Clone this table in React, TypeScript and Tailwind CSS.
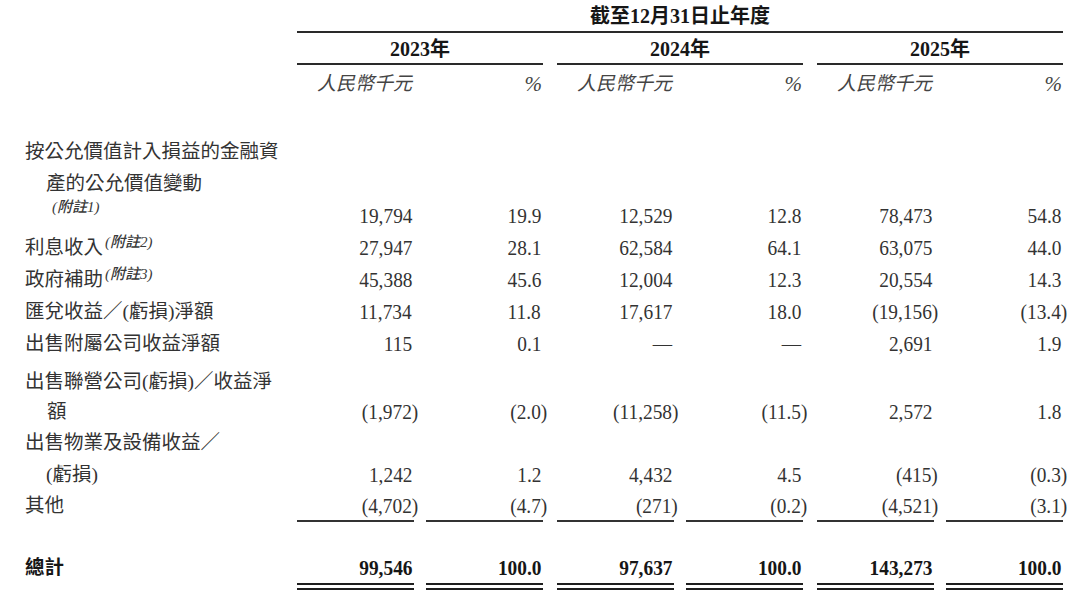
import React from "react";

const FONT = "font-['Liberation_Serif','Noto_Sans_CJK_TC',serif]";

type RowDef = {
  lines: React.ReactNode[];
  values: string[];
  kind?: "normal" | "under" | "total";
  extra?: string;
  leading?: string;
};

const Sup = ({ t, hi }: { t: string; hi?: boolean }) => (
  <span
    className={`text-[15px] font-medium italic leading-none ml-[2px] text-[#3a3a3a] ${
      hi ? "align-[10px]" : "align-[7px]"
    }`}
  >
    {t}
  </span>
);

const Num = ({ v }: { v: string }) => {
  const inner = v.startsWith("(") ? (
    <>
      {v.slice(0, -1)}
      <span className="-mr-[7px]">)</span>
    </>
  ) : (
    <>{v}</>
  );
  return (
    <span className="inline-block origin-right scale-x-[0.88] leading-none">{inner}</span>
  );
};

const rows: RowDef[] = [
  {
    lines: [
      "按公允價值計入損益的金融資",
      <span className="pl-[21px]">產的公允價值變動</span>,
      <span className="pl-[25px]">
        <Sup t="(附註1)" hi />
      </span>,
    ],
    values: ["19,794", "19.9", "12,529", "12.8", "78,473", "54.8"],
  },
  {
    lines: [
      <>
        利息收入
        <Sup t="(附註2)" />
      </>,
    ],
    values: ["27,947", "28.1", "62,584", "64.1", "63,075", "44.0"],
  },
  {
    lines: [
      <>
        政府補助
        <Sup t="(附註3)" />
      </>,
    ],
    values: ["45,388", "45.6", "12,004", "12.3", "20,554", "14.3"],
  },
  {
    lines: ["匯兌收益／(虧損)淨額"],
    values: ["11,734", "11.8", "17,617", "18.0", "(19,156)", "(13.4)"],
  },
  {
    lines: ["出售附屬公司收益淨額"],
    values: ["115", "0.1", "—", "—", "2,691", "1.9"],
  },
  {
    lines: ["出售聯營公司(虧損)／收益淨", <span className="pl-[22px]">額</span>],
    values: ["(1,972)", "(2.0)", "(11,258)", "(11.5)", "2,572", "1.8"],
    extra: "mt-[7px]",
    leading: "leading-[30px]",
  },
  {
    lines: ["出售物業及設備收益／", <span className="pl-[21px]">(虧損)</span>],
    values: ["1,242", "1.2", "4,432", "4.5", "(415)", "(0.3)"],
  },
  {
    lines: ["其他"],
    values: ["(4,702)", "(4.7)", "(271)", "(0.2)", "(4,521)", "(3.1)"],
    kind: "under",
    leading: "leading-[29px]",
  },
  {
    lines: ["總計"],
    values: ["99,546", "100.0", "97,637", "100.0", "143,273", "100.0"],
    kind: "total",
    extra: "mt-[31px]",
    leading: "leading-[30px]",
  },
];

function Row({ r }: { r: RowDef }) {
  const lead = r.leading ?? "leading-[32px]";
  const border =
    r.kind === "under"
      ? "border-b-2 border-[#333]"
      : r.kind === "total"
      ? "border-b-[7px] border-double border-[#1e1e1e]"
      : "";
  const labelBorder =
    r.kind === "under"
      ? "border-b-2 border-transparent"
      : r.kind === "total"
      ? "border-b-[7px] border-transparent"
      : "";
  const bold = r.kind === "total" ? "font-bold text-[#161616]" : "";
  return (
    <div className={`flex items-end ${r.extra ?? ""} ${bold}`}>
      <div className={`w-[272px] text-[19.5px] ${lead} ${labelBorder}`}>
        {r.lines.map((l, i) => (
          <div key={i} className="whitespace-nowrap">
            {l}
          </div>
        ))}
      </div>
      <div className="flex gap-[14px]">
        {[0, 1, 2].map((g) => (
          <div key={g} className="flex gap-[12px]">
            {[0, 1].map((c) => (
              <div
                key={c}
                className={`w-[117px] text-right pr-[2px] text-[22px] whitespace-nowrap ${lead} ${border}`}
              >
                <Num v={r.values[g * 2 + c]} />
              </div>
            ))}
          </div>
        ))}
      </div>
    </div>
  );
}

export default function App() {
  const years = ["2023", "2024", "2025"];
  return (
    <div
      className={`w-[1080px] h-[597px] overflow-hidden bg-white pl-[25px] text-[#333] ${FONT}`}
    >
      <div className="flex">
        <div className="w-[272px]" />
        <div className="w-[766px]">
          <div className="h-[33px] border-b-2 border-[#2a2a2a] pt-[2px] text-center text-[20px] font-bold leading-[29px] text-[#161616]">
            截至12月31日止年度
          </div>
          <div className="flex gap-[14px]">
            {years.map((y) => (
              <div
                key={y}
                className="h-[32px] w-[246px] border-b-2 border-[#2a2a2a] pt-[3px] text-center text-[20px] font-bold leading-[27px] text-[#161616]"
              >
                {y}年
              </div>
            ))}
          </div>
          <div className="mb-[35px] flex gap-[14px]">
            {years.map((y) => (
              <div key={y} className="flex h-[36px] gap-[12px] pt-[2px] leading-[34px]">
                <div className="w-[117px] pr-[2px] text-right text-[19px] italic text-[#444]">
                  人民幣千元
                </div>
                <div className="w-[117px] pr-[1px] text-right text-[21px] italic text-[#444]">
                  %
                </div>
              </div>
            ))}
          </div>
        </div>
      </div>
      {rows.map((r, i) => (
        <Row key={i} r={r} />
      ))}
    </div>
  );
}
